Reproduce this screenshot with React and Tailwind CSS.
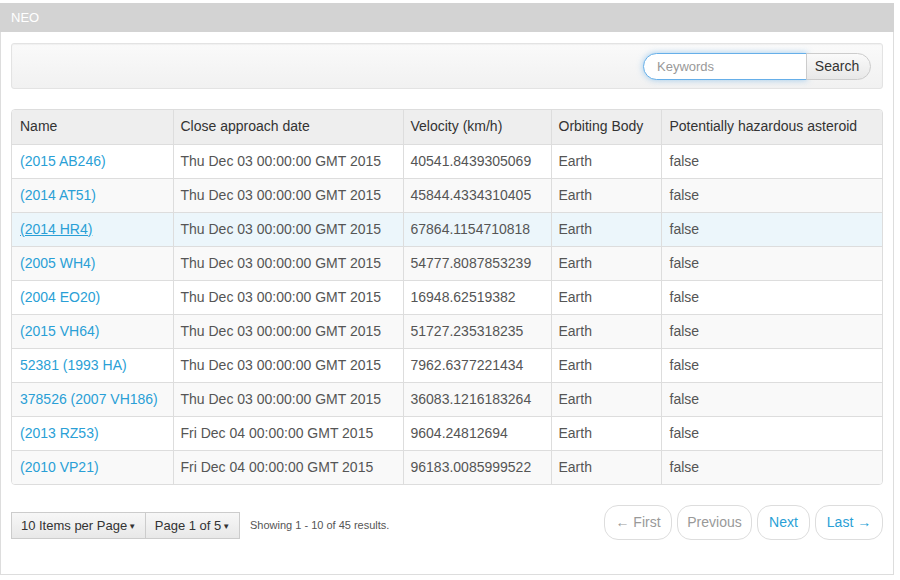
import React from "react";

const ROWS = [
  ["(2015 AB246)", "Thu Dec 03 00:00:00 GMT 2015", "40541.8439305069"],
  ["(2014 AT51)", "Thu Dec 03 00:00:00 GMT 2015", "45844.4334310405"],
  ["(2014 HR4)", "Thu Dec 03 00:00:00 GMT 2015", "67864.1154710818"],
  ["(2005 WH4)", "Thu Dec 03 00:00:00 GMT 2015", "54777.8087853239"],
  ["(2004 EO20)", "Thu Dec 03 00:00:00 GMT 2015", "16948.62519382"],
  ["(2015 VH64)", "Thu Dec 03 00:00:00 GMT 2015", "51727.235318235"],
  ["52381 (1993 HA)", "Thu Dec 03 00:00:00 GMT 2015", "7962.6377221434"],
  ["378526 (2007 VH186)", "Thu Dec 03 00:00:00 GMT 2015", "36083.1216183264"],
  ["(2013 RZ53)", "Fri Dec 04 00:00:00 GMT 2015", "9604.24812694"],
  ["(2010 VP21)", "Fri Dec 04 00:00:00 GMT 2015", "96183.0085999522"],
];

export default function App() {
  return (
    <div className="bg-white min-h-[580px] pt-[3px] font-['Liberation_Sans',Arial,sans-serif] text-[#555]">
      <div className="w-[894px] h-[572px] border-x border-b border-[#ddd] flex flex-col">
        {/* Header */}
        <div className="h-[29px] -mx-px bg-[#d3d3d3] text-white text-[13px] pl-[11px] flex items-center">
          NEO
        </div>

        <div className="px-[10px] pt-[11px] flex flex-col">
          {/* Search well */}
          <div className="h-[46px] border border-[#e3e3e3] rounded-[3px] bg-gradient-to-b from-[#fafafa] to-[#f1f1f1] shadow-[inset_0_1px_1px_rgba(0,0,0,0.04)] flex items-center justify-end pr-[11px]">
            <div className="flex h-[27px]">
              <input
                type="text"
                placeholder="Keywords"
                className="w-[164px] h-[27px] rounded-l-full border border-[#66afe9] bg-white pl-[13px] text-[13px] text-[#555] placeholder:text-[#999] outline-none shadow-[0_0_6px_rgba(102,175,233,0.6)]"
              />
              <button className="w-[65px] h-[27px] -ml-px rounded-r-full border border-[#ccc] bg-gradient-to-b from-[#fafafa] to-[#e8e8e8] text-[14px] text-[#333] pr-[3px]">
                Search
              </button>
            </div>
          </div>

          {/* Table */}
          <div className="mt-[20px] border border-[#ddd] rounded-[4px] overflow-hidden">
            <table className="w-full table-fixed border-collapse text-[14px]">
              <colgroup>
                <col className="w-[161px]" />
                <col className="w-[230px]" />
                <col className="w-[148px]" />
                <col className="w-[110px]" />
                <col />
              </colgroup>
              <thead>
                <tr className="h-[34px] bg-[#eee] text-[#333]">
                  <th className="font-normal text-left pl-[8px] border-r border-[#ddd]">Name</th>
                  <th className="font-normal text-left pl-[7px] border-r border-[#ddd]">Close approach date</th>
                  <th className="font-normal text-left pl-[7px] border-r border-[#ddd]">Velocity (km/h)</th>
                  <th className="font-normal text-left pl-[7px] border-r border-[#ddd]">Orbiting Body</th>
                  <th className="font-normal text-left pl-[8px]">Potentially hazardous asteroid</th>
                </tr>
              </thead>
              <tbody>
                {ROWS.map((r, i) => (
                  <tr
                    key={r[0]}
                    className={`h-[34px] border-t border-[#ddd] ${
                      i === 2 ? "bg-[#ecf6fb]" : i % 2 === 1 ? "bg-[#f9f9f9]" : "bg-white"
                    }`}
                  >
                    <td className="pl-[8px] border-r border-[#ddd]">
                      <a href="#" className={`text-[#2a9fd6] ${i === 2 ? "underline" : ""}`}>
                        {r[0]}
                      </a>
                    </td>
                    <td className="pl-[7px] border-r border-[#ddd] whitespace-nowrap">{r[1]}</td>
                    <td className="pl-[7px] border-r border-[#ddd]">{r[2]}</td>
                    <td className="pl-[7px] border-r border-[#ddd]">Earth</td>
                    <td className="pl-[8px]">false</td>
                  </tr>
                ))}
              </tbody>
            </table>
          </div>

          {/* Footer */}
          <div className="mt-[20px] flex items-start justify-between">
            <div className="flex items-center mt-[7px]">
              <button className="h-[27px] w-[135px] border border-[#ccc] bg-gradient-to-b from-[#f7f7f7] to-[#e8e8e8] text-[13px] text-[#333] flex items-center justify-center">
                10 Items per Page<span className="text-[8px] ml-px mt-[2px]">▼</span>
              </button>
              <button className="h-[27px] w-[95px] -ml-px border border-[#ccc] bg-gradient-to-b from-[#f7f7f7] to-[#e8e8e8] text-[13px] text-[#333] flex items-center justify-center">
                Page 1 of 5<span className="text-[8px] ml-px mt-[2px]">▼</span>
              </button>
              <span className="ml-[10px] text-[11px] text-[#555]">Showing 1 - 10 of 45 results.</span>
            </div>
            <div className="flex items-center gap-[5px]">
              <span className="h-[35px] w-[68px] border border-[#ddd] rounded-[14px] text-[14px] text-[#999] flex items-center justify-center">
                ← First
              </span>
              <span className="h-[35px] w-[75px] border border-[#ddd] rounded-[14px] text-[14px] text-[#999] flex items-center justify-center">
                Previous
              </span>
              <span className="h-[35px] w-[53px] border border-[#ddd] rounded-[14px] text-[14px] text-[#2a9fd6] flex items-center justify-center">
                Next
              </span>
              <span className="h-[35px] w-[68px] border border-[#ddd] rounded-[14px] text-[14px] text-[#2a9fd6] flex items-center justify-center">
                Last →
              </span>
            </div>
          </div>
        </div>
      </div>
    </div>
  );
}
